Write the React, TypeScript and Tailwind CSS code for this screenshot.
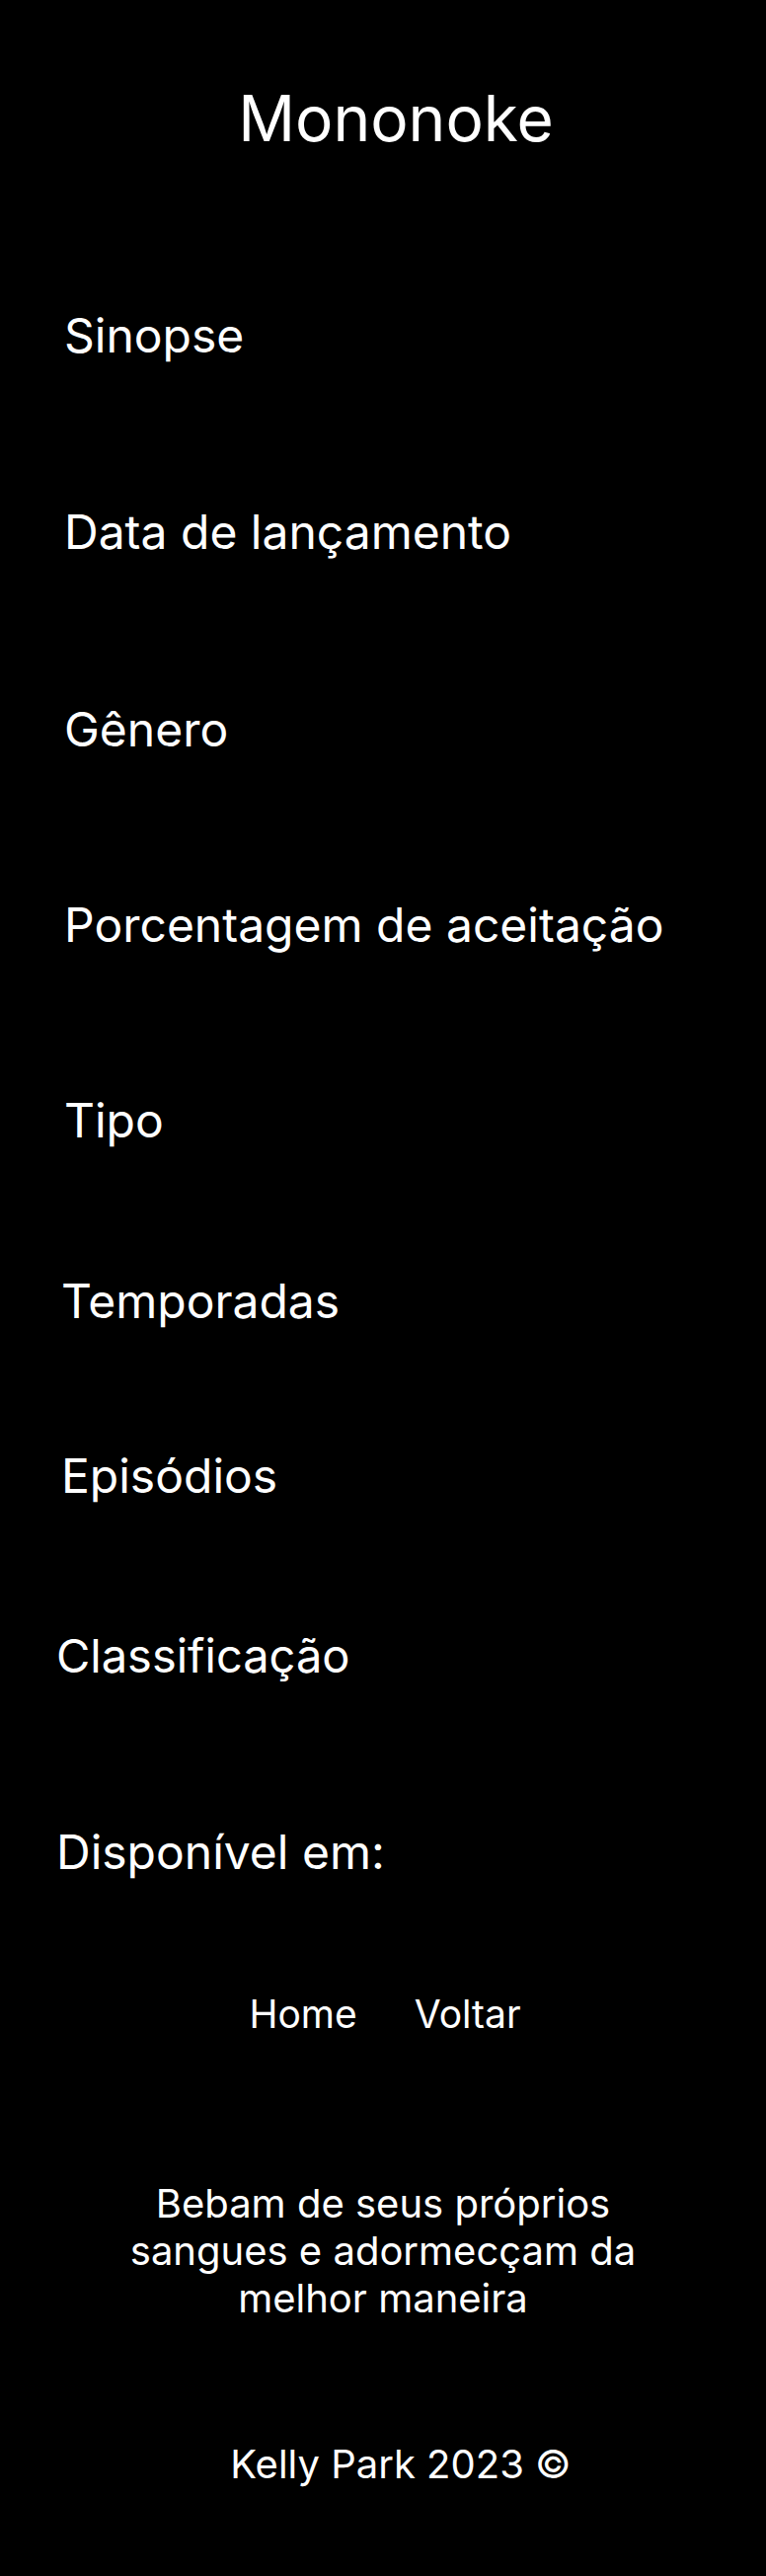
export default function App() {
  const font = { fontFamily: "Inter, 'Noto Sans', sans-serif" }

  return (
    <div className="w-[776px] min-h-[2609px] bg-black text-white flex flex-col" style={font}>
      <h1 className="mt-[88px] pl-[26px] text-center text-[64px] leading-none font-normal">Mononoke</h1>

      <div className="flex flex-col text-[48px] leading-none">
        <p className="mt-[164px] pl-[65px]">Sinopse</p>
        <p className="mt-[151px] pl-[65px]">Data de lançamento</p>
        <p className="mt-[152px] pl-[65px]">Gênero</p>
        <p className="mt-[150px] pl-[65px]">Porcentagem de aceitação</p>
        <p className="mt-[150px] pl-[65px]">Tipo</p>
        <p className="mt-[135px] pl-[62px]">Temporadas</p>
        <p className="mt-[129px] pl-[62px]">Episódios</p>
        <p className="mt-[134px] pl-[57px] text-[47px]">Classificação</p>
        <p className="mt-[152px] pl-[57px]">Disponível em:</p>
      </div>

      <nav className="mt-[120px] flex justify-center gap-[58px] pl-[4px] text-[39px] leading-none">
        <a href="#">Home</a>
        <a href="#">Voltar</a>
      </nav>

      <p className="mt-[149px] text-center text-[40px] leading-[48px]">
        Bebam de seus próprios
        <br />
        sangues e adormecçam da
        <br />
        melhor maneira
      </p>

      <footer className="mt-[124px] pl-[36px] text-center text-[40px] leading-none">Kelly Park 2023 ©</footer>
    </div>
  )
}
